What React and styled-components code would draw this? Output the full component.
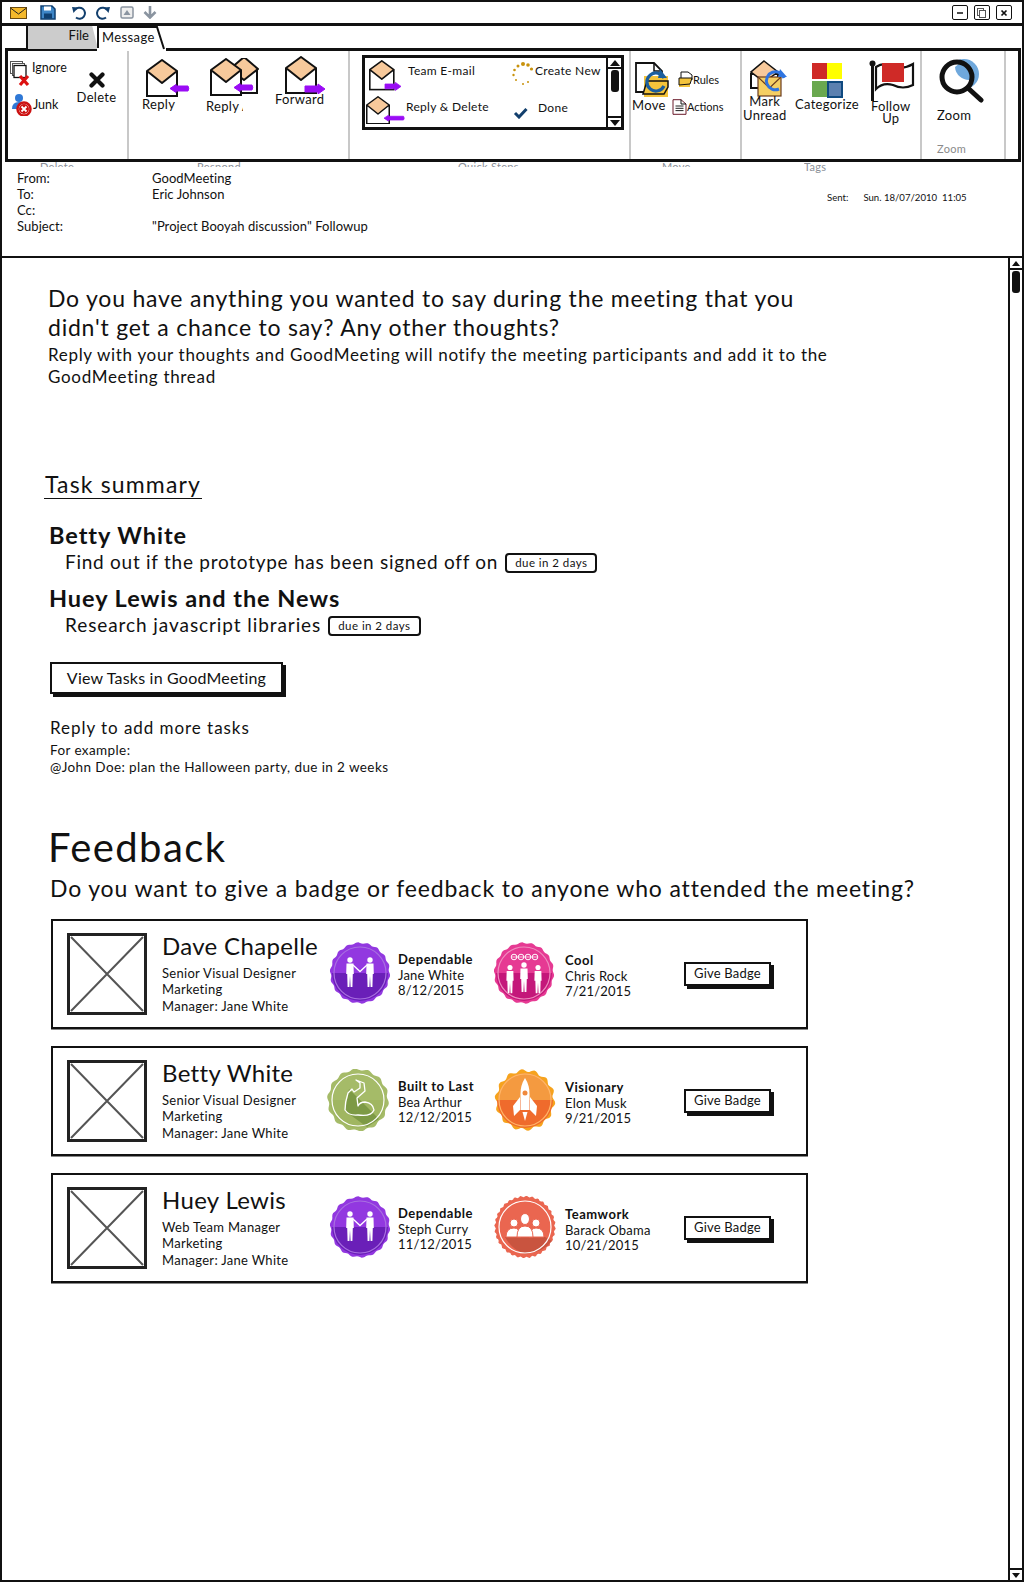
import React from 'react';
import styled, { createGlobalStyle } from 'styled-components';

const Global = createGlobalStyle`
  html, body { margin: 0; padding: 0; background: #fff; }
  * { box-sizing: border-box; }
  body { font-family: "Lato", "Open Sans", sans-serif; color: #111; }
`;

const Window = styled.div`
  width: 1024px; height: 1582px; border: 2px solid #111; display: flex; flex-direction: column; overflow: hidden; background: #fff;
`;
const TitleBar = styled.div`
  height: 24px; flex: none; display: flex; align-items: center; border-bottom: 3px solid #111; padding: 0 10px 0 8px;
`;
const TitleIcon = styled.span`display: flex; margin-left: ${p => p.$ml || 0}px;`;
const WinControls = styled.div`margin-left: auto; display: flex; gap: 6px;`;
const WinButton = styled.span`
  width: 16px; height: 15px; border: 1px solid #111; border-radius: 2px; display: flex; align-items: center; justify-content: center;
`;
const TabRow = styled.div`height: 25px; flex: none; display: flex; padding-left: 24px; position: relative; z-index: 1; margin-bottom: -3px;`;
const FileTab = styled.div`
  width: 72px; height: 23px; background: #ccc; border-left: 2px solid #111;
  clip-path: polygon(0 0, 92% 0, 100% 100%, 0 100%); font-size: 13px; text-align: right; padding: 1px 9px 0 0; line-height: 16px;
`;
const MsgTab = styled.div`
  width: 69px; height: 25px; margin-left: -1px; background: #fff; font-size: 13px; letter-spacing: .4px; padding: 3px 0 0 5px; line-height: 16px; position: relative;
`;
const TabSlant = styled.svg`position: absolute; right: 0; top: 0;`;
const Ribbon = styled.div`
  height: 114px; flex: none; margin: 0 1px 0 3px; border: 3px solid #111; display: flex;
`;
const Group = styled.div`
  width: ${p => p.$w}px; flex: none; display: flex; align-items: flex-start; position: relative;
  border-right: 2px solid #c8c8c8;
`;
const Stack = styled.div`
  display: flex; flex-direction: column; width: ${p => p.$w}px; flex: none; margin-left: ${p => p.$ml || 0}px; margin-top: ${p => p.$mt || 0}px;
`;
const SmallRow = styled.div`
  display: flex; align-items: ${p => p.$align || 'center'}; margin-top: ${p => p.$mt || 0}px; margin-left: ${p => p.$ml || 0}px; font-size: ${p => p.$fs || 12.5}px; gap: ${p => p.$gap ?? 2}px; line-height: 14px; white-space: nowrap;
`;
const Tool = styled.div`
  display: flex; flex-direction: column; flex: none; width: ${p => p.$w}px; margin-left: ${p => p.$ml || 0}px; margin-top: ${p => p.$mt || 0}px;
  align-items: ${p => p.$center ? 'center' : 'flex-start'};
`;
const ToolLabel = styled.span`
  display: block; font-size: 13px; line-height: ${p => p.$lh || 14}px; margin-top: ${p => p.$mt || 0}px; margin-left: ${p => p.$ml || 0}px; letter-spacing: .3px; white-space: nowrap; text-align: center;
  ${p => p.$max ? `max-width: ${p.$max}; overflow: hidden;` : ''}
`;
const QuickBox = styled.div`
  margin: 4px 0 0 12px; width: 262px; height: 75px; border: 3px solid #111; display: flex;
`;
const QuickGrid = styled.div`flex: 1; display: grid; grid-template-columns: 140px 1fr; grid-template-rows: 36px 33px;`;
const QuickCell = styled.div`
  display: flex; align-items: flex-start; white-space: nowrap; padding-left: ${p => p.$pl || 0}px; padding-top: ${p => p.$pt || 0}px; gap: ${p => p.$gap || 0}px;
`;
const QuickText = styled.span`font-size: 12px; line-height: 14px; letter-spacing: .3px; margin-top: ${p => p.$mt || 0}px;`;
const CheckHolder = styled.span`margin-top: 6px;`;
const QuickScroll = styled.div`
  width: 15px; flex: none; border-left: 2px solid #111; display: flex; flex-direction: column; align-items: center;
`;
const QuickThumb = styled.div`width: 8px; height: 22px; background: #111; border-radius: 3px; margin-top: 1px;`;
const QuickArrow = styled.div`
  width: 100%; height: 11px; display: flex; align-items: center; justify-content: center; ${p => p.$up ? 'border-bottom: 2px solid #111;' : 'border-top: 2px solid #111; margin-top: auto;'}
`;
const ZoomLabel = styled.span`font-size: 11px; line-height: 13px; color: #8a8a8a; letter-spacing: .3px; margin-top: 20px; margin-left: -1px;`;

const LabelStrip = styled.div`height: 0; flex: none; display: flex; align-items: flex-start; padding-left: 38px;`;
const GroupLabel = styled.span`
  display: block; font-size: 11px; line-height: 10px; color: #8a8f98; letter-spacing: .3px; height: ${p => p.$clip ? 5 : 11}px; overflow: hidden; width: ${p => p.$w}px; flex: none; white-space: nowrap;
`;

const Header = styled.div`
  height: 96px; flex: none; border-bottom: 2px solid #111; padding: 8px 0 0 15px; display: flex;
`;
const MetaTable = styled.div`
  display: grid; grid-template-columns: 135px auto; grid-auto-rows: 16px; font-size: 13px; line-height: 16px; letter-spacing: .06px; align-self: flex-start; width: 620px;
`;
const Sent = styled.div`
  display: flex; font-size: 9.6px; margin: 21px 0 0 190px; line-height: 14px; white-space: nowrap;
`;
const SentDate = styled.span`margin-left: 15px;`;

const BodyRow = styled.div`flex: 1; display: flex; min-height: 0;`;
const Content = styled.div`flex: 1; padding: 26px 0 0 46px; min-width: 0;`;
const Lead = styled.p`margin: 0; font-size: 23px; line-height: 29px; letter-spacing: .78px; width: 770px;`;
const SubLead = styled.p`margin: 2px 0 0; font-size: 17px; line-height: 22px; letter-spacing: .68px; width: 790px;`;
const TaskTitle = styled.h2`
  margin: 83px 0 0 -4px; font-weight: 400; font-size: 23px; line-height: 26px; height: 28px; width: 158px; letter-spacing: 1.15px; border-bottom: 1px solid #111; padding-left: 1px; white-space: nowrap;
`;
const PersonName = styled.div`
  margin: ${p => p.$mt}px 0 0 1px; font-size: 23.5px; line-height: 29px; font-weight: 700; letter-spacing: .95px;
`;
const TaskLine = styled.div`
  margin-left: 17px; display: flex; align-items: center; font-size: 19px; line-height: 24px; letter-spacing: ${p => p.$ls}px; white-space: nowrap;
`;
const Due = styled.span`
  margin: 1px 0 0 7px; height: 20px; padding: 0 8px; border: 2px solid #111; border-radius: 4px; font-size: 11.5px; line-height: 16px; letter-spacing: .45px; display: block;
`;
const ViewButton = styled.div`
  margin: 25px 0 0 2px; width: 233px; height: 32px; border: 2px solid #111; box-shadow: 3px 3px 0 #111; font-size: 16px; line-height: 28px; text-align: center; letter-spacing: .2px;
`;
const ReplyNote = styled.div`margin: 23px 0 0 2px; font-size: 17px; line-height: 22px; letter-spacing: .95px;`;
const Example = styled.div`margin: 3px 0 0 2px; font-size: 13.5px; line-height: 17px; letter-spacing: .4px;`;
const FeedbackTitle = styled.h1`margin: 48px 0 0 0; font-weight: 400; font-size: 40px; line-height: 46px; letter-spacing: 1.4px;`;
const FeedbackAsk = styled.div`margin: 3px 0 0 2px; font-size: 23px; line-height: 30px; letter-spacing: .85px; white-space: nowrap;`;
const Cards = styled.div`margin: 16px 0 0 3px; width: 757px; display: flex; flex-direction: column; gap: 17px;`;
const Card = styled.div`
  height: 110px; border: 2px solid #111; display: flex; align-items: flex-start; padding: 12px 0 0 14px; box-shadow: 0 1px 0 #888;
`;
const Placeholder = styled.svg`flex: none;`;
const Who = styled.div`width: 168px; margin-left: 15px; flex: none; margin-top: -2px;`;
const WhoName = styled.div`font-size: 24px; line-height: 30px; letter-spacing: .32px; white-space: nowrap; margin-bottom: 4px;`;
const WhoLine = styled.div`font-size: 13px; line-height: 16.3px; letter-spacing: .3px; white-space: nowrap;`;
const BadgeSlot = styled.div`
  display: flex; width: ${p => p.$w}px; flex: none; margin-left: ${p => p.$ml || 0}px; margin-top: 9px;
`;
const BadgeText = styled.div`margin-left: ${p => p.$ml}px; margin-top: ${p => p.$mt}px; font-size: 13px; line-height: 15.5px; letter-spacing: .2px; white-space: nowrap;`;
const BadgeName = styled.div`font-weight: 700; letter-spacing: .5px;`;
const GiveBadge = styled.div`
  width: 87px; height: 24px; margin-top: 29px; border: 2px solid #111; box-shadow: 3px 3px 0 #111; font-size: 13px; line-height: 19px; text-align: center; flex: none; letter-spacing: .2px;
`;

const Scrollbar = styled.div`
  width: 14px; flex: none; border-left: 2px solid #111; display: flex; flex-direction: column; align-items: center;
`;
const ScrollEnd = styled.div`
  width: 100%; height: 12px; flex: none; display: flex; align-items: center; justify-content: center; ${p => p.$top ? 'border-bottom: 2px solid #111;' : 'border-top: 2px solid #111; margin-top: auto;'}
`;
const ScrollThumb = styled.div`width: 8px; height: 22px; margin-top: 1px; background: #111; border-radius: 3px;`;

/* ---------- drawings ---------- */
const Env = ({ w = 48, h = 38, arrow, two, scale = 1 }) => (
  <svg width={w} height={h} viewBox={`0 0 ${w / scale} ${h / scale}`} style={{ display: 'block', flex: 'none' }}>
    {two && <g transform="translate(20 -2)">
      <rect x="1" y="13" width="26" height="24" fill="#fff" stroke="#111" strokeWidth="2" />
      <path d="M14 1 L28 13 L14 24 L0 13Z" fill="#f7c99b" stroke="#111" strokeWidth="2" strokeLinejoin="round" />
    </g>}
    <rect x="1" y="13" width="30" height="24" fill="#fff" stroke="#111" strokeWidth="2" />
    <path d="M16 1 L31 12 L16 24 L1 12Z" fill="#f7c99b" stroke="#111" strokeWidth="2" strokeLinejoin="round" />
    {arrow === 'left' && <path d="M24 29.500 L30 25.500 L30 27 L42 27 Q43.500 29.500 42 32 L30 32 L30 33.500Z" fill="#9a0cf5" stroke="#9a0cf5" strokeLinejoin="round" />}
    {arrow === 'long' && <path d="M24 29.500 L30 25.500 L30 27 L50 27 Q52 29.500 50 32 L30 32 L30 33.500Z" fill="#9a0cf5" stroke="#9a0cf5" strokeLinejoin="round" />}
    {arrow === 'right' && <path d="M20 30 L33 30 L33 28 L40 33 L33 38 L33 36 L20 36Z" fill="#9a0cf5" stroke="#9a0cf5" strokeLinejoin="round" />}
  </svg>
);

const IgnoreIcon = () => (
  <svg width="20" height="26" viewBox="0 0 20 26" style={{ display: 'block' }}>
    <rect x=".5" y=".5" width="12" height="12" fill="#fff" stroke="#555" />
    <rect x="2.500" y="2.500" width="12" height="12" fill="#fff" stroke="#555" />
    <rect x="4" y="4.500" width="12" height="12" fill="#fff" stroke="#111" strokeWidth="1.300" />
    <path d="M10 15 L18 24 M18 15 L10 24" stroke="#d11" strokeWidth="3.200" />
  </svg>
);
const JunkIcon = () => (
  <svg width="20" height="23" viewBox="0 0 20 23" style={{ display: 'block' }}>
    <circle cx="7" cy="5" r="4" fill="#2f78d6" />
    <path d="M0 16 Q0 9 7 9 Q14 9 14 16Z" fill="#2f78d6" />
    <circle cx="12" cy="16" r="6.500" fill="#fff" stroke="#c11" strokeWidth="2.500" />
    <circle cx="12" cy="16" r="5" fill="#c11" />
    <path d="M9.500 13.500 L14.500 18.500 M14.500 13.500 L9.500 18.500" stroke="#fff" strokeWidth="1.800" />
  </svg>
);
const DeleteX = () => (
  <svg width="16" height="16" viewBox="0 0 16 16" style={{ display: 'block' }}>
    <path d="M2.500 2.500 L13.500 13.500 M13.500 2.500 L2.500 13.500" stroke="#111" strokeWidth="4.200" strokeLinecap="round" />
  </svg>
);
const DotsIcon = () => (
  <svg width="22" height="24" viewBox="0 0 22 24" style={{ display: 'block' }}>
    {[[11, 2, 2], [16, 3, 1.800], [19.500, 7, 1.600], [6, 4, 1.500], [2.500, 8, 1.300], [1.500, 13, 1.200], [4, 18, 1], [11, 22, 1], [16, 20, 1]].map(([x, y, r], i) => <circle key={i} cx={x} cy={y} r={r} fill="#c8920c" />)}
  </svg>
);
const CheckIcon = () => (
  <svg width="15" height="12" viewBox="0 0 15 12" style={{ display: 'block' }}>
    <path d="M2 6 L6 10 L13.500 2" fill="none" stroke="#123f6d" strokeWidth="3" />
  </svg>
);
const MoveIcon = () => (
  <svg width="36" height="37" viewBox="0 0 36 37" style={{ display: 'block' }}>
    <path d="M2 1 L20 1 L28 9 L28 30 L2 30Z" fill="#fff" stroke="#111" strokeWidth="1.800" />
    <path d="M20 1 L20 9 L28 9" fill="none" stroke="#111" strokeWidth="1.500" />
    <path d="M10 14 L34 14 L34 35 L10 35Z" fill="#f4c33a" />
    <path d="M9 32 L13 19 L34 19 L34 25 L30 32Z" fill="#f4c33a" stroke="#111" strokeWidth="1.500" />
    <path d="M30 16 A9 9 0 1 0 30 24" fill="none" stroke="#1b5e9e" strokeWidth="3.200" />
    <path d="M26 7 L33 16 L24 16Z" fill="#1b5e9e" />
  </svg>
);
const RulesIcon = () => (
  <svg width="15" height="17" viewBox="0 0 15 17" style={{ display: 'block' }}>
    <path d="M3 8 L3 1 L10 1 L14 4 L14 9" fill="#fff" stroke="#111" />
    <rect x="1" y="10" width="11" height="6" fill="#f4c33a" />
    <path d="M1 14 L1 7 L14 7 L12 13 Z" fill="#f4c33a" stroke="#111" />
  </svg>
);
const ActionsIcon = () => (
  <svg width="15" height="16" viewBox="0 0 15 16" style={{ display: 'block' }}>
    <path d="M1 .700 L9 .700 L14 5 L14 15.300 L1 15.300Z" fill="#fff" stroke="#6a1a2a" />
    <path d="M9 .700 L9 5 L14 5" fill="none" stroke="#111" />
    <path d="M3.500 7 L11.500 7 M3.500 9.300 L11.500 9.300 M3.500 11.600 L11.500 11.600" stroke="#222" />
  </svg>
);
const MarkIcon = () => (
  <svg width="40" height="37" viewBox="0 0 40 37" style={{ display: 'block' }}>
    <rect x="1" y="14" width="27" height="14" fill="#fff" stroke="#111" strokeWidth="2" />
    <path d="M14 1 L28 12 L14 22 L1 12Z" fill="#f7c99b" stroke="#111" strokeWidth="1.500" />
    <rect x="8" y="17" width="23" height="19" fill="#f5cf64" stroke="#6a3b1e" strokeWidth="1.200" />
    <path d="M8 17 L19.500 28 L31 17" fill="none" stroke="#6a3b1e" strokeWidth="1.200" />
    <path d="M34 18 A9 9 0 1 0 29 29" fill="none" stroke="#2f74e0" strokeWidth="3" />
    <path d="M30 9 L37 17 L28 17Z" fill="#2f74e0" />
  </svg>
);
const CategorizeIcon = () => (
  <svg width="31" height="35" viewBox="0 0 31 35" style={{ display: 'block' }}>
    <rect x="0" y="0" width="15" height="16" fill="#cf2a27" />
    <rect x="15" y="0" width="15" height="16" fill="#ffff00" />
    <rect x="0" y="18" width="15" height="16" fill="#6aa84f" />
    <rect x="16" y="19" width="14" height="15" fill="#5b80b0" stroke="#0f4a80" strokeWidth="2" />
  </svg>
);
const FlagIcon = () => (
  <svg width="46" height="42" viewBox="0 0 46 42" style={{ display: 'block' }}>
    <circle cx="3.500" cy="3.500" r="3" fill="#111" />
    <rect x="2" y="4" width="3" height="37" fill="#111" />
    <path d="M7 7 Q14 2 24 6 Q34 10 44 4 L44 25 Q34 30 24 25 Q14 22 7 29Z" fill="#fff" stroke="#111" strokeWidth="2.200" />
    <path d="M13 3 L35 3 L35 22 L13 22Z" fill="#cf2a27" />
  </svg>
);
const ZoomIcon = () => (
  <svg width="46" height="46" viewBox="0 0 46 46" style={{ display: 'block' }}>
    <circle cx="26" cy="16" r="15" fill="#6fa8dc" />
    <circle cx="19" cy="19" r="15" fill="#fff" />
    <path d="M22 5 A15 15 0 0 1 32 22 A14 14 0 0 1 17 9 Z" fill="#6fa8dc" />
    <circle cx="19" cy="19" r="15" fill="none" stroke="#111" strokeWidth="5" />
    <path d="M31 31 L43 42" stroke="#111" strokeWidth="5" strokeLinecap="round" />
  </svg>
);

const Tri = ({ up, size = 5 }) => (
  <svg width={size * 2} height={size + 1} viewBox="0 0 10 6" style={{ display: 'block' }}>
    <path d={up ? 'M0 6 L5 0 L10 6Z' : 'M0 0 L5 6 L10 0Z'} fill="#111" />
  </svg>
);

const scallop = (cx, cy, r, amp, n) => {
  const pts = [];
  for (let i = 0; i < 360; i += 3) {
    const a = (i * Math.PI) / 180;
    const rr = r + amp * Math.sin(n * a);
    pts.push(`${(cx + rr * Math.cos(a)).toFixed(2)},${(cy + rr * Math.sin(a) * 1.02).toFixed(2)}`);
  }
  return pts.join(' ');
};

const Man = ({ x, y, s = 1 }) => (
  <g transform={`translate(${x} ${y}) scale(${s})`} fill="#fff">
    <circle cx="0" cy="-11" r="2.700" />
    <path d="M-3.500 -7.500 L3.500 -7.500 L3.800 3 L2.800 3 L2.400 16 L.6 16 L0 5 L-.6 16 L-2.400 16 L-2.800 3 L-3.800 3Z" />
  </g>
);
const Handshake = () => (
  <g>
    <Man x="21" y="29" />
    <Man x="41" y="29" />
    <path d="M24 23 L31 29.500 L38 23" stroke="#fff" strokeWidth="1.300" fill="none" />
  </g>
);
const Crowd = () => (
  <g>
    <Man x="17" y="36" s=".95" />
    <Man x="31" y="34" />
    <Man x="45" y="36" s=".95" />
    {[21, 28, 35, 42].map(x => <circle key={x} cx={x} cy="15" r="2.800" fill="none" stroke="#fff" strokeWidth="1" />)}
    <path d="M19 15 L44 15" stroke="#fff" strokeWidth=".7" />
  </g>
);
const Muscle = () => (
  <g>
    <path d="M22 20 L52 50 L40 58 L18 42Z" fill="#7d9a45" />
    <path d="M29 11 L33 14 L33 19 L27 23 L25 20 L21 24 Q18 33 18 41 Q22 47 31 46 Q44 48 47 41 Q46 34 38 33 Q33 33 31 37 L30 29 L38 22 L37 14 Z" fill="none" stroke="#fff" strokeWidth="1.300" strokeLinejoin="round" />
  </g>
);
const Rocket = () => (
  <g fill="#fff">
    <path d="M31 9 Q35.500 16 35.500 25 L35.500 41 L26.500 41 L26.500 25 Q26.500 16 31 9Z" />
    <path d="M26 28 L19 37 L20 47 L26 41Z M36 28 L43 37 L42 47 L36 41Z" />
    <path d="M28.500 43 L33.500 43 L31 52Z" />
    <circle cx="31" cy="24" r="2.500" fill="#f08a3c" />
  </g>
);
const Team = () => (
  <g>
    <path d="M11 41 L51 41 L58 45 Q50 56 31 58 Q18 54 11 41Z" fill="#c9543f" />
    <g fill="#fff" stroke="#ea6650" strokeWidth="1">
      <circle cx="20" cy="27" r="4" /><path d="M12 41 Q12 32 20 32 Q26 32 27 41Z" />
      <circle cx="42" cy="27" r="4" /><path d="M50 41 Q50 32 42 32 Q36 32 35 41Z" />
      <ellipse cx="31" cy="23" rx="4.500" ry="5.500" /><path d="M23 41 Q23 30 31 30 Q39 30 39 41Z" />
    </g>
  </g>
);

const KIND = {
  dependable: { a: '#9238e0', b: '#6a1fb8', n: 18, amp: .7, ring: '#a970e0', glyph: <Handshake />, r: 29.5 },
  cool: { a: '#e63a93', b: '#c4177a', n: 18, amp: .7, ring: '#ef8dbf', glyph: <Crowd />, r: 29.5 },
  built: { a: '#a5bb68', b: '#a0b661', n: 14, amp: 1, ring: '#fff', glyph: <Muscle />, r: 30 },
  visionary: { a: '#f49a40', b: '#ef6b2c', n: 14, amp: 1.4, ring: '#ffb668', glyph: <Rocket />, r: 29, edge: '#f6a31d' },
  teamwork: { a: '#ea6650', b: '#ea6650', n: 32, amp: .8, ring: '#fff', glyph: <Team />, r: 30 },
};

const Medal = ({ kind }) => {
  const k = KIND[kind];
  return (
    <svg width="62" height="62" viewBox="0 0 62 62" style={{ display: 'block', flex: 'none' }}>
      <polygon points={scallop(31, 31, k.r, k.amp, k.n)} fill={k.edge || k.a} />
      <path d="M4 31 A27 27 0 0 1 58 31Z" fill={k.a} />
      <path d="M3 31 A28 28 0 0 0 59 31Z" fill={k.b} />
      {k.glyph}
      <circle cx="31" cy="31" r="26" fill="none" stroke={k.ring} strokeWidth="1.200" />
    </svg>
  );
};

const people = [
  {
    name: 'Dave Chapelle', lines: ['Senior Visual Designer', 'Marketing', 'Manager: Jane White'],
    a: { kind: 'dependable', t: 'Dependable', w: 'Jane White', d: '8/12/2015', ml: 0 },
    b: { kind: 'cool', t: 'Cool', w: 'Chris Rock', d: '7/21/2015', ml: 0 },
  },
  {
    name: 'Betty White', lines: ['Senior Visual Designer', 'Marketing', 'Manager: Jane White'],
    a: { kind: 'built', t: 'Built to Last', w: 'Bea Arthur', d: '12/12/2015', ml: -2 },
    b: { kind: 'visionary', t: 'Visionary', w: 'Elon Musk', d: '9/21/2015', ml: 1 },
  },
  {
    name: 'Huey Lewis', lines: ['Web Team Manager', 'Marketing', 'Manager: Jane White'],
    a: { kind: 'dependable', t: 'Dependable', w: 'Steph Curry', d: '11/12/2015', ml: 0 },
    b: { kind: 'teamwork', t: 'Teamwork', w: 'Barack Obama', d: '10/21/2015', ml: 1 },
  },
];

const Award = ({ data, width, left, gap, top }) => (
  <BadgeSlot $w={width - data.ml} $ml={left + data.ml}>
    <Medal kind={data.kind} />
    <BadgeText $ml={gap - data.ml} $mt={top}>
      <BadgeName>{data.t}</BadgeName>
      <div>{data.w}</div>
      <div>{data.d}</div>
    </BadgeText>
  </BadgeSlot>
);

export default function App() {
  return (
    <Window>
      <Global />
      <TitleBar>
        <TitleIcon><svg width="17" height="12" viewBox="0 0 17 12"><rect x=".5" y=".5" width="16" height="11" fill="#f4b82b" stroke="#6a4a10" /><path d="M.5 1 L8.500 7 L16.500 1" fill="none" stroke="#222" /></svg></TitleIcon>
        <TitleIcon $ml={13}><svg width="16" height="15" viewBox="0 0 16 15"><path d="M1 1 L12 1 L15 4 L15 14 L1 14Z" fill="#3d85c6" stroke="#0f3f70" strokeWidth="1.500" /><rect x="4" y="1.500" width="7" height="4" fill="#fff" /><rect x="4" y="8.500" width="8" height="5" fill="#0f3f70" /></svg></TitleIcon>
        <TitleIcon $ml={16}><svg width="14" height="14" viewBox="0 0 14 14"><path d="M3 4 A5.500 5.500 0 1 1 4 11.500" fill="none" stroke="#123f6d" strokeWidth="2" /><path d="M0 1 L6 1.500 L1.500 7Z" fill="#123f6d" /></svg></TitleIcon>
        <TitleIcon $ml={10}><svg width="14" height="14" viewBox="0 0 14 14"><path d="M11 4 A5.500 5.500 0 1 0 10 11.500" fill="none" stroke="#123f6d" strokeWidth="2" /><path d="M14 1 L8 1.500 L12.500 7Z" fill="#123f6d" /></svg></TitleIcon>
        <TitleIcon $ml={10}><svg width="14" height="13" viewBox="0 0 14 13"><rect x="1" y="1" width="12" height="11" rx="1.500" fill="#eee" stroke="#8a94a0" strokeWidth="1.500" /><path d="M3.500 9 L7 4 L10.500 9Z" fill="#8a94a0" /></svg></TitleIcon>
        <TitleIcon $ml={9}><svg width="14" height="13" viewBox="0 0 14 13"><path d="M7 0 L7 11 M1.500 6 L7 11.500 L12.500 6" fill="none" stroke="#8a94a0" strokeWidth="2.600" /></svg></TitleIcon>
        <WinControls>
          <WinButton><svg width="8" height="8"><path d="M1 4 H7" stroke="#111" strokeWidth="1.500" /></svg></WinButton>
          <WinButton><svg width="10" height="10"><rect x=".5" y=".5" width="6" height="7" fill="#fff" stroke="#555" /><rect x="2.500" y="2.500" width="6" height="7" fill="#fff" stroke="#555" /></svg></WinButton>
          <WinButton><svg width="8" height="8"><path d="M1.500 1.500 L6.500 6.500 M6.500 1.500 L1.500 6.500" stroke="#111" strokeWidth="1.700" /></svg></WinButton>
        </WinControls>
      </TitleBar>
      <TabRow>
        <FileTab>File</FileTab>
        <MsgTab>
          Message
          <TabSlant width="69" height="25" viewBox="0 0 69 25">
            <path d="M1 22 L1 1 L60 1 L67 23" fill="none" stroke="#111" strokeWidth="2" />
          </TabSlant>
        </MsgTab>
      </TabRow>
      <Ribbon>
        <Group $w={121}>
          <Stack $w={62} $ml={2} $mt={10}>
            <SmallRow $align="flex-start" $gap={2}><IgnoreIcon /><span>Ignore</span></SmallRow>
            <SmallRow $mt={6} $gap={1} $ml={2}><JunkIcon /><span>Junk</span></SmallRow>
          </Stack>
          <Tool $w={43} $ml={3} $mt={21} $center>
            <DeleteX />
            <ToolLabel $mt={2}>Delete</ToolLabel>
          </Tool>
        </Group>
        <Group $w={221}>
          <Tool $w={48} $ml={17} $mt={8}>
            <Env arrow="left" />
            <ToolLabel $mt={0} $ml={-4}>Reply</ToolLabel>
          </Tool>
          <Tool $w={54} $ml={16} $mt={7}>
            <Env w={54} arrow="left" two />
            <ToolLabel $mt={3} $ml={-4} $max="37px">Reply All</ToolLabel>
          </Tool>
          <Tool $w={50} $ml={21} $mt={5}>
            <Env w={50} arrow="right" />
            <ToolLabel $mt={-2} $ml={-10}>Forward</ToolLabel>
          </Tool>
        </Group>
        <Group $w={281}>
          <QuickBox>
            <QuickGrid>
              <QuickCell $pl={4} $pt={2} $gap={5}><Env w={34} h={31} scale={.8} arrow="right" /><QuickText $mt={4}>Team E-mail</QuickText></QuickCell>
              <QuickCell $pl={7} $pt={4} $gap={1}><DotsIcon /><QuickText $mt={2}>Create New</QuickText></QuickCell>
              <QuickCell $pl={1} $pt={2}><Env w={40} h={28} scale={.75} arrow="long" /><QuickText $mt={4}>Reply &amp; Delete</QuickText></QuickCell>
              <QuickCell $pl={8} $pt={7} $gap={10}><CheckHolder><CheckIcon /></CheckHolder><QuickText>Done</QuickText></QuickCell>
            </QuickGrid>
            <QuickScroll>
              <QuickArrow $up><Tri up /></QuickArrow>
              <QuickThumb />
              <QuickArrow><Tri /></QuickArrow>
            </QuickScroll>
          </QuickBox>
        </Group>
        <Group $w={111}>
          <Tool $w={36} $ml={3} $mt={11}>
            <MoveIcon />
            <ToolLabel $mt={-1} $ml={-2}>Move</ToolLabel>
          </Tool>
          <Stack $w={60} $ml={2} $mt={20}>
            <SmallRow $fs={11} $ml={6} $gap={0}><RulesIcon /><span>Rules</span></SmallRow>
            <SmallRow $fs={11} $mt={11} $gap={0}><ActionsIcon /><span>Actions</span></SmallRow>
          </Stack>
        </Group>
        <Group $w={180}>
          <Tool $w={42} $ml={8} $mt={9}>
            <MarkIcon />
            <ToolLabel $mt={-3} $ml={-7}>Mark<br />Unread</ToolLabel>
          </Tool>
          <Tool $w={66} $ml={2} $mt={12} $center>
            <CategorizeIcon />
            <ToolLabel $mt={-1}>Categorize</ToolLabel>
          </Tool>
          <Tool $w={46} $ml={9} $mt={9}>
            <FlagIcon />
            <ToolLabel $lh={12} $mt={-2} $ml={2}>Follow<br />Up</ToolLabel>
          </Tool>
        </Group>
        <Group $w={84}>
          <Tool $w={60} $ml={16} $mt={7}>
            <ZoomIcon />
            <ToolLabel $mt={4} $ml={-1}>Zoom</ToolLabel>
            <ZoomLabel>Zoom</ZoomLabel>
          </Tool>
        </Group>
      </Ribbon>
      <LabelStrip>
        <GroupLabel $clip $w={157}>Delete</GroupLabel>
        <GroupLabel $clip $w={261}>Respond</GroupLabel>
        <GroupLabel $clip $w={204}>Quick Steps</GroupLabel>
        <GroupLabel $clip $w={142}>Move</GroupLabel>
        <GroupLabel $w={60}>Tags</GroupLabel>
      </LabelStrip>
      <Header>
        <MetaTable>
          <span>From:</span><span>GoodMeeting</span>
          <span>To:</span><span>Eric Johnson</span>
          <span>Cc:</span><span />
          <span>Subject:</span><span>"Project Booyah discussion" Followup</span>
        </MetaTable>
        <Sent><span>Sent:</span><SentDate>Sun. 18/07/2010 &nbsp;11:05</SentDate></Sent>
      </Header>
      <BodyRow>
        <Content>
          <Lead>Do you have anything you wanted to say during the meeting that you didn't get a chance to say? Any other thoughts?</Lead>
          <SubLead>Reply with your thoughts and GoodMeeting will notify the meeting participants and add it to the GoodMeeting thread</SubLead>
          <TaskTitle>Task summary</TaskTitle>
          <PersonName $mt={22}>Betty White</PersonName>
          <TaskLine $ls={.74}>Find out if the prototype has been signed off on <Due>due in 2 days</Due></TaskLine>
          <PersonName $mt={10}>Huey Lewis and the News</PersonName>
          <TaskLine $ls={.92}>Research javascript libraries <Due>due in 2 days</Due></TaskLine>
          <ViewButton>View Tasks in GoodMeeting</ViewButton>
          <ReplyNote>Reply to add more tasks</ReplyNote>
          <Example>For example:<br />@John Doe: plan the Halloween party, due in 2 weeks</Example>
          <FeedbackTitle>Feedback</FeedbackTitle>
          <FeedbackAsk>Do you want to give a badge or feedback to anyone who attended the meeting?</FeedbackAsk>
          <Cards>
            {people.map(p => (
              <Card key={p.name}>
                <Placeholder width="80" height="82" viewBox="0 0 80 82">
                  <rect x="1.500" y="1.500" width="77" height="79" fill="#fff" stroke="#222" strokeWidth="3" />
                  <path d="M4 4 L76 78 M76 4 L4 78" stroke="#555" strokeWidth="2" />
                </Placeholder>
                <Who>
                  <WhoName>{p.name}</WhoName>
                  {p.lines.map(l => <WhoLine key={l}>{l}</WhoLine>)}
                </Who>
                <Award data={p.a} width={164} left={-1} gap={7} top={10} />
                <Award data={p.b} width={191} left={0} gap={10} top={11} />
                <GiveBadge>Give Badge</GiveBadge>
              </Card>
            ))}
          </Cards>
        </Content>
        <Scrollbar>
          <ScrollEnd $top><Tri up size={4} /></ScrollEnd>
          <ScrollThumb />
          <ScrollEnd><Tri size={4} /></ScrollEnd>
        </Scrollbar>
      </BodyRow>
    </Window>
  );
}
